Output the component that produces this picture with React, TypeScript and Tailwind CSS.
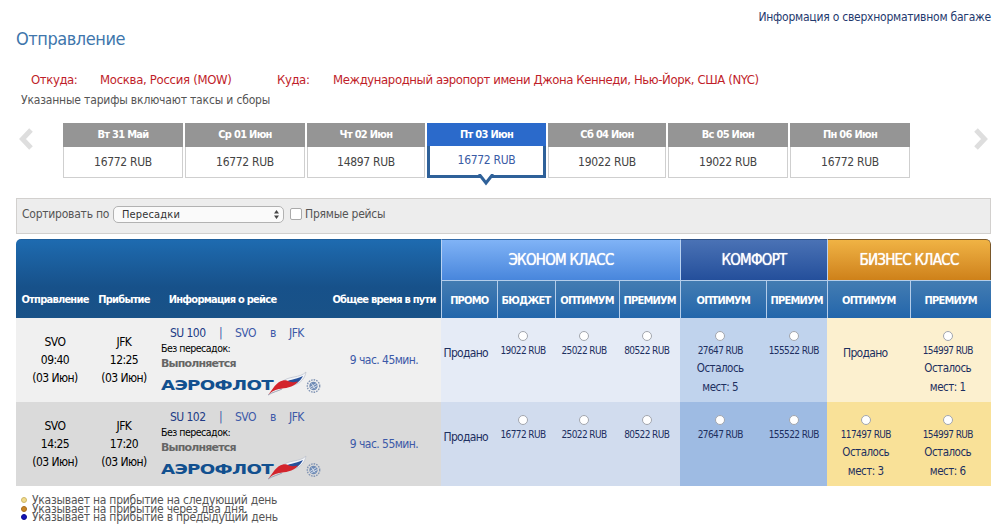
import clsx from 'clsx'

interface Fare {
  price?: string
  left?: number
}

interface Flight {
  number: string
  departure: string
  arrival: string
  duration: string
  fares: Fare[]
}

const days = [
  { date: 'Вт 31 Май', price: '16772 RUB' },
  { date: 'Ср 01 Июн', price: '16772 RUB' },
  { date: 'Чт 02 Июн', price: '14897 RUB' },
  { date: 'Пт 03 Июн', price: '16772 RUB', active: true },
  { date: 'Сб 04 Июн', price: '19022 RUB' },
  { date: 'Вс 05 Июн', price: '19022 RUB' },
  { date: 'Пн 06 Июн', price: '16772 RUB' },
]

const flights: Flight[] = [
  {
    number: 'SU 100',
    departure: '09:40',
    arrival: '12:25',
    duration: '9 час. 45мин.',
    fares: [
      {},
      { price: '19022 RUB' },
      { price: '25022 RUB' },
      { price: '80522 RUB' },
      { price: '27647 RUB', left: 5 },
      { price: '155522 RUB' },
      {},
      { price: '154997 RUB', left: 1 },
    ],
  },
  {
    number: 'SU 102',
    departure: '14:25',
    arrival: '17:20',
    duration: '9 час. 55мин.',
    fares: [
      {},
      { price: '16772 RUB' },
      { price: '25022 RUB' },
      { price: '80522 RUB' },
      { price: '27647 RUB' },
      { price: '155522 RUB' },
      { price: '117497 RUB', left: 3 },
      { price: '154997 RUB', left: 6 },
    ],
  },
]

const tariffs = ['ПРОМО', 'БЮДЖЕТ', 'ОПТИМУМ', 'ПРЕМИУМ', 'ОПТИМУМ', 'ПРЕМИУМ', 'ОПТИМУМ', 'ПРЕМИУМ']

const legend = [
  { text: 'Указывает на прибытие на следующий день', color: 'bg-[#f3dc8c] border-[#cdb668]' },
  { text: 'Указывает на прибытие через два дня.', color: 'bg-[#c98524] border-[#a56a1a]' },
  { text: 'Указывает на прибытие в предыдущий день', color: 'bg-[#1414b4] border-[#0c0c90]' },
]

const columns =
  'grid grid-cols-[78px_60px_173px_114px_55.5px_58px_64px_61.5px_85.5px_61.5px_82.5px_81.5px]'

const classTitle = 'border-t border-l border-l-[#b9d2f2] text-center text-[15px] leading-[40px] font-normal tracking-[-0.75px] [text-shadow:0_0_1px_#fff]'

function Chevron({ flip = false }: { flip?: boolean }) {
  return (
    <svg width="16" height="24" viewBox="0 0 16 24" className={clsx(flip && '-scale-x-100')}>
      <path d="M13 3 L4.5 12 L13 21" fill="none" stroke="#dedede" strokeWidth="5" />
    </svg>
  )
}

function AeroflotLogo() {
  return (
    <svg width="162" height="25" viewBox="0 0 162 25" className="block">
      <text
        x="0"
        y="19.3"
        textLength="112"
        lengthAdjust="spacingAndGlyphs"
        fill="#12508f"
        fontSize="14.5"
        fontWeight="bold"
        fontFamily="DejaVu Sans, sans-serif"
      >
        АЭРОФЛОТ
      </text>
      <path d="M117 15 C122 8 128 7 133 6 C138 5 142 4 145 1 C144 7 140 12 133 14 Z" fill="#f3f5f9" stroke="#b9bfca" strokeWidth=".7" />
      <path d="M122 13 C127 8 134 9 142 5 C139 11 134 14 127 15 Z" fill="#27509a" />
      <path d="M107 24 C112 18 115 11 122 9.5 C128 8.5 127 13 137 10.5 C132 17 124 17 118 18 C113 19 110 21 107 24Z" fill="#d3242c" />
      <path d="M107 24 C112 21 117 20 121 18" fill="none" stroke="#8a93a8" strokeWidth=".8" />
      <circle cx="152.5" cy="15" r="6.2" fill="none" stroke="#8194b4" strokeWidth="1.4" strokeDasharray="1.6 1" />
      <circle cx="152.5" cy="15" r="4.2" fill="#6f8bb5" />
      <path d="M149 16.5 L155.5 12.5 M150 18 L156.5 14.5 M150.5 12.5 L154 17.5" stroke="#e8edf5" strokeWidth=".8" />
    </svg>
  )
}

function Airport({ code, time }: { code: string; time: string }) {
  return (
    <div className="pt-[15px] text-center leading-[18px] text-black">
      <div>{code}</div>
      <div>{time}</div>
      <div>(03 Июн)</div>
    </div>
  )
}

function FareCell({ fare, className }: { fare: Fare; className: string }) {
  if (!fare.price) {
    return (
      <div className={clsx('pt-[26px] pr-[6px] text-center leading-[18px] tracking-[-0.7px] text-[#1d2f5f]', className)}>
        Продано
      </div>
    )
  }

  return (
    <div className={clsx('flex flex-col items-center pt-[13px] pr-[5px] text-[#1d2f5f]', className)}>
      <input
        type="radio"
        className="h-[10px] w-[10px] appearance-none rounded-full border border-[#a2a6ae] bg-white"
      />
      <div className="mt-[3px] text-[10px] leading-[13px] tracking-[-0.6px] whitespace-nowrap">{fare.price}</div>
      {fare.left && (
        <div className="mt-[2px] text-center text-[11.5px] leading-[18.5px] tracking-[-0.5px]">
          Осталось
          <br />
          мест: {fare.left}
        </div>
      )}
    </div>
  )
}

function FlightRow({ flight, dark }: { flight: Flight; dark: boolean }) {
  const economy = dark ? 'bg-[#d1dcee]' : 'bg-[#e5ebf6]'
  const comfort = dark ? 'bg-[#9ebbe3]' : 'bg-[#c0d3ed]'
  const business = dark ? 'bg-[#f9e198]' : 'bg-[#fcf0cf]'

  return (
    <div className={clsx(columns, 'h-[84px] tracking-[-0.55px]', dark ? 'bg-[#dadada]' : 'bg-[#f0f0f0]')}>
      <Airport code="SVO" time={flight.departure} />
      <Airport code="JFK" time={flight.arrival} />
      <div className="pt-[7px] pl-[7px]">
        <div className="grid grid-cols-[49px_16px_35px_19px_auto] pl-[9px] leading-4 text-[#3c59a8]">
          <span className="text-[#213a85]">{flight.number}</span>
          <span>|</span>
          <span>SVO</span>
          <span>в</span>
          <span>JFK</span>
        </div>
        <div className="text-[10.5px] leading-[15px] tracking-[-0.5px] text-black">Без пересадок:</div>
        <div className="font-['DejaVu_Sans',sans-serif] text-[11px] leading-[15px] font-bold tracking-[-0.8px] text-[#666]">
          Выполняется
        </div>
        <AeroflotLogo />
      </div>
      <div className="pt-[33px] text-center leading-[18px] text-[#3c59a8]">{flight.duration}</div>
      {flight.fares.map((fare, i) => (
        <FareCell key={i} fare={fare} className={i < 4 ? economy : i < 6 ? comfort : business} />
      ))}
    </div>
  )
}

export default function App() {
  return (
    <div className="h-[525px] w-[1008px] overflow-hidden bg-white pr-[17px] pl-4 font-['DejaVu_Sans_Condensed','DejaVu_Sans',sans-serif] text-[12px] tracking-[-0.24px] text-[#555]">
      <div className="pt-2 text-right leading-[18px] text-[#1f3a6e]">Информация о сверхнормативном багаже</div>
      <h1 className="mt-[1px] text-[18px] leading-6 tracking-[-0.45px] text-[#4076ac]">Отправление</h1>

      <div className="mt-5 flex pl-[15px] text-[13px] leading-[18px] tracking-[-0.4px] text-[#bf1e2a]">
        <span className="w-[69px]">Откуда:</span>
        <span className="w-[177px] tracking-[-0.3px]">Москва, Россия (MOW)</span>
        <span className="w-[56px]">Куда:</span>
        <span>Международный аэропорт имени Джона Кеннеди, Нью-Йорк, США (NYC)</span>
      </div>
      <div className="mt-[2px] pl-[5px] leading-[18px] tracking-[-0.17px]">Указанные тарифы включают таксы и сборы</div>

      <div className="mt-[14px] flex h-[55px]">
        <div className="w-[47px] pt-[4px] pl-[2px]">
          <Chevron />
        </div>
        <div className="grid w-[847px] grid-cols-[120px_120px_118px_119px_118px_120px_120px] gap-[2px] text-center">
          {days.map((day) =>
            day.active ? (
              <div key={day.date} className="relative border-[3px] border-t-0 border-[#2f6199] bg-white">
                <div className="-mx-[3px] h-[23px] bg-[#2b6acb] text-[11px] leading-[23px] font-bold tracking-[-0.7px] text-white">
                  {day.date}
                </div>
                <div className="leading-[29px] tracking-[-0.3px] text-[#3a5ba5]">{day.price}</div>
                <svg width="18" height="12" viewBox="0 0 18 12" className="absolute top-[51px] left-[47px]">
                  <path d="M2 0 L9 9 L16 0" fill="#fff" stroke="#2f6199" strokeWidth="3" />
                </svg>
              </div>
            ) : (
              <div key={day.date} className="border border-[#cfcfcf] bg-white">
                <div className="-mx-px -mt-px h-[24px] bg-[#959595] text-[11px] leading-[24px] font-bold tracking-[-0.7px] text-white">
                  {day.date}
                </div>
                <div className="leading-[30px] tracking-[-0.3px] text-[#444]">{day.price}</div>
              </div>
            ),
          )}
        </div>
        <div className="pt-[4px] pl-[63px]">
          <Chevron flip />
        </div>
      </div>

      <div className="mt-5 flex h-9 items-center border border-[#d2d0ce] bg-[#ededed] pb-[4px] pl-[5px]">
        <span className="w-[91px] whitespace-nowrap">Сортировать по</span>
        <div className="flex h-[17px] w-[171px] items-center justify-between rounded-[5px] border border-[#b2b2b2] bg-[#fafafa] pt-px pr-[4px] pl-2 text-[11px] leading-[15px] tracking-[0.15px] text-[#333]">
          Пересадки
          <svg width="5" height="9" viewBox="0 0 5 9">
            <path d="M0 3.6 L2.5 0 L5 3.6Z M0 5.4 L2.5 9 L5 5.4Z" fill="#444" />
          </svg>
        </div>
        <input
          type="checkbox"
          className="mr-[3px] ml-[6px] h-[12px] w-[12px] appearance-none rounded-[2px] border border-[#aaa] bg-white"
        />
        <span>Прямые рейсы</span>
      </div>

      <div className="mt-[5px] overflow-hidden rounded-t-[5px]">
        <div className={clsx(columns, 'h-[79px] grid-rows-[41px_38px] font-bold text-white')}>
          <div className="col-span-4 row-span-2 grid grid-cols-[78px_60px_173px_114px] border-t border-[#1f5f9c] bg-linear-to-b from-[#1e6bb0] via-[#17518a] via-60% to-[#195287] pt-[51px] text-center text-[11px] leading-[18px] tracking-[-0.75px] whitespace-nowrap">
            <div>Отправление</div>
            <div>Прибытие</div>
            <div className="pr-[36px]">Информация о рейсе</div>
            <div>Общее время в пути</div>
          </div>
          <div className={clsx(classTitle, 'col-span-4 border-t-[#346ba9] bg-linear-to-b from-[#80b3f6] to-[#4886dc]')}>
            ЭКОНОМ КЛАСС
          </div>
          <div className={clsx(classTitle, 'col-span-2 border-t-[#2f5286] bg-linear-to-b from-[#4a72b5] to-[#244f9b]')}>
            КОМФОРТ
          </div>
          <div
            className={clsx(
              classTitle,
              'col-span-2 rounded-tr-[5px] border-r border-t-[#79572a] border-r-[#79572a] bg-linear-to-b from-[#f0b344] to-[#ce8119]',
            )}
          >
            БИЗНЕС КЛАСС
          </div>
          {tariffs.map((name, i) => (
            <div
              key={i}
              className="h-[38px] border-t border-l border-[#b4cdea] bg-linear-to-b from-[#437cb2] to-[#2266ab] pt-px text-center text-[11px] leading-[37px] tracking-[-0.8px]"
            >
              {name}
            </div>
          ))}
        </div>
        {flights.map((flight, i) => (
          <FlightRow key={flight.number} flight={flight} dark={i % 2 === 1} />
        ))}
      </div>

      <ul className="mt-[10px] pl-[5px]">
        {legend.map((item) => (
          <li key={item.text} className="flex h-[8.5px] items-center">
            <span className={clsx('mr-[5px] h-[6px] w-[6px] rounded-full border', item.color)} />
            <span className="leading-[8.5px]">{item.text}</span>
          </li>
        ))}
      </ul>
    </div>
  )
}
